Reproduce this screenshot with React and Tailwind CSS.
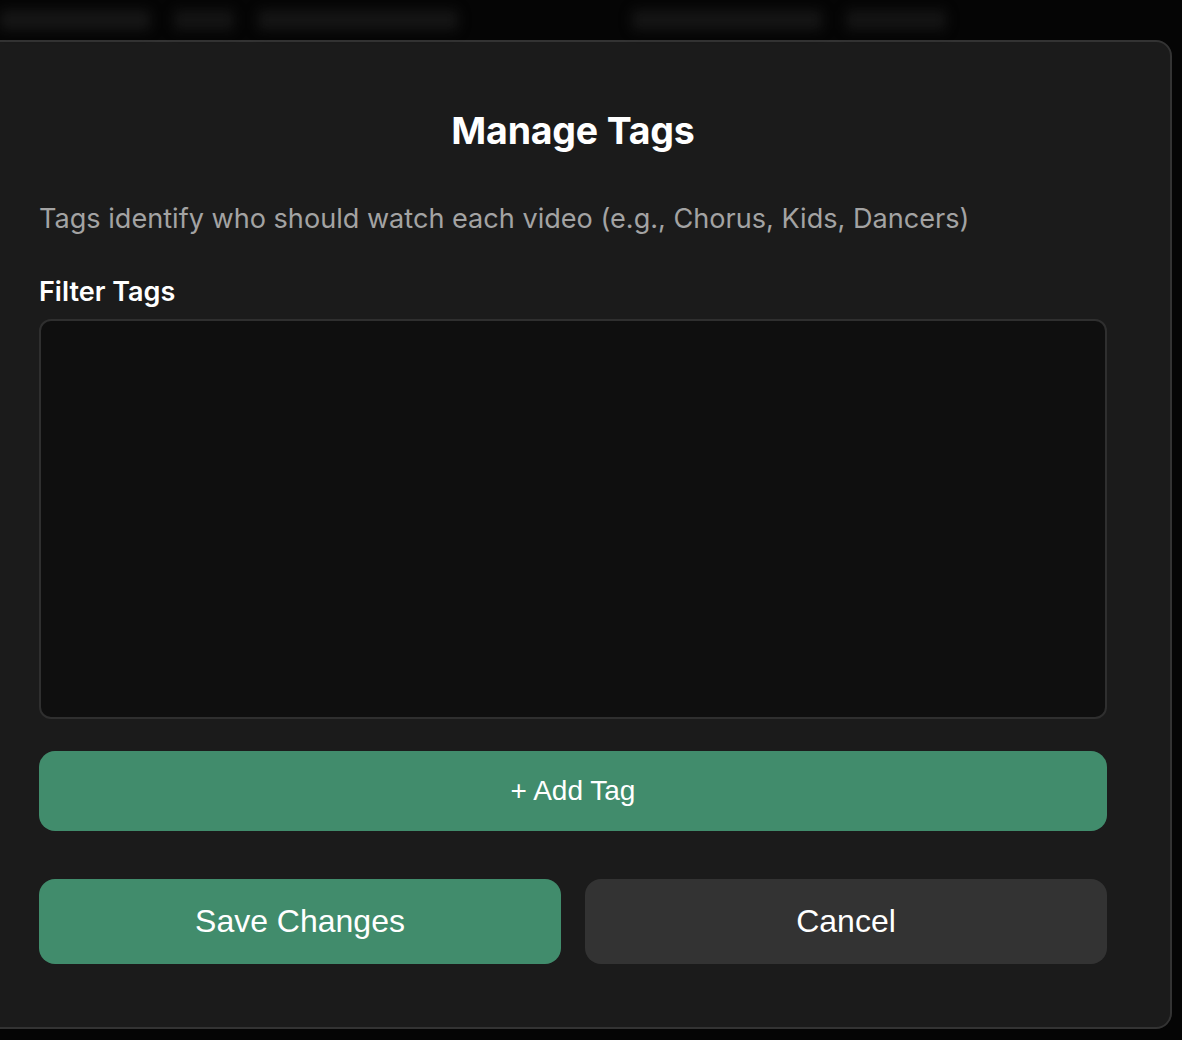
export default function App() {
  return (
    <div className="min-h-[1040px] w-[1182px] overflow-hidden bg-[#050505] font-['Inter',sans-serif]">
      {/* Blurred page behind the overlay */}
      <div className="flex h-10 items-center gap-6 blur-[6px]">
        <div className="h-5 w-[150px] rounded bg-[#161616]" />
        <div className="h-5 w-[60px] rounded bg-[#141414]" />
        <div className="h-5 w-[200px] rounded bg-[#151515]" />
        <div className="ml-[150px] h-5 w-[190px] rounded bg-[#151515]" />
        <div className="h-5 w-[100px] rounded bg-[#141414]" />
      </div>

      {/* Modal */}
      <div className="ml-[-26px] w-[1198px] rounded-2xl border-2 border-[#333333] bg-[#1b1b1b] px-[63px] pb-[63px] pt-[70px]">
        <h2 className="text-center text-[37.5px] font-bold leading-[1] tracking-[-0.2px] text-white">
          Manage Tags
        </h2>

        <p className="mt-[51px] text-[27.1px] leading-[35px] text-[#a3a3a3]">
          Tags identify who should watch each video (e.g., Chorus, Kids, Dancers)
        </p>

        <label className="mt-[38px] block text-[27px] font-semibold leading-[35px] text-white">
          Filter Tags
        </label>

        <div className="mt-[10px] h-[400px] rounded-xl border-2 border-[#2f2f2f] bg-[#0f0f0f]" />

        <button className="mt-[32px] flex h-[80px] w-full items-center justify-center rounded-2xl bg-[#418c6c] font-['Liberation_Sans',Arial,sans-serif] text-[28px] text-white">
          + Add Tag
        </button>

        <div className="mt-[48px] grid grid-cols-2 gap-6">
          <button className="flex h-[85px] items-center justify-center rounded-2xl bg-[#418c6c] font-['Liberation_Sans',Arial,sans-serif] text-[32px] text-white">
            Save Changes
          </button>
          <button className="flex h-[85px] items-center justify-center rounded-2xl bg-[#333333] font-['Liberation_Sans',Arial,sans-serif] text-[32px] text-white">
            Cancel
          </button>
        </div>
      </div>
    </div>
  );
}
